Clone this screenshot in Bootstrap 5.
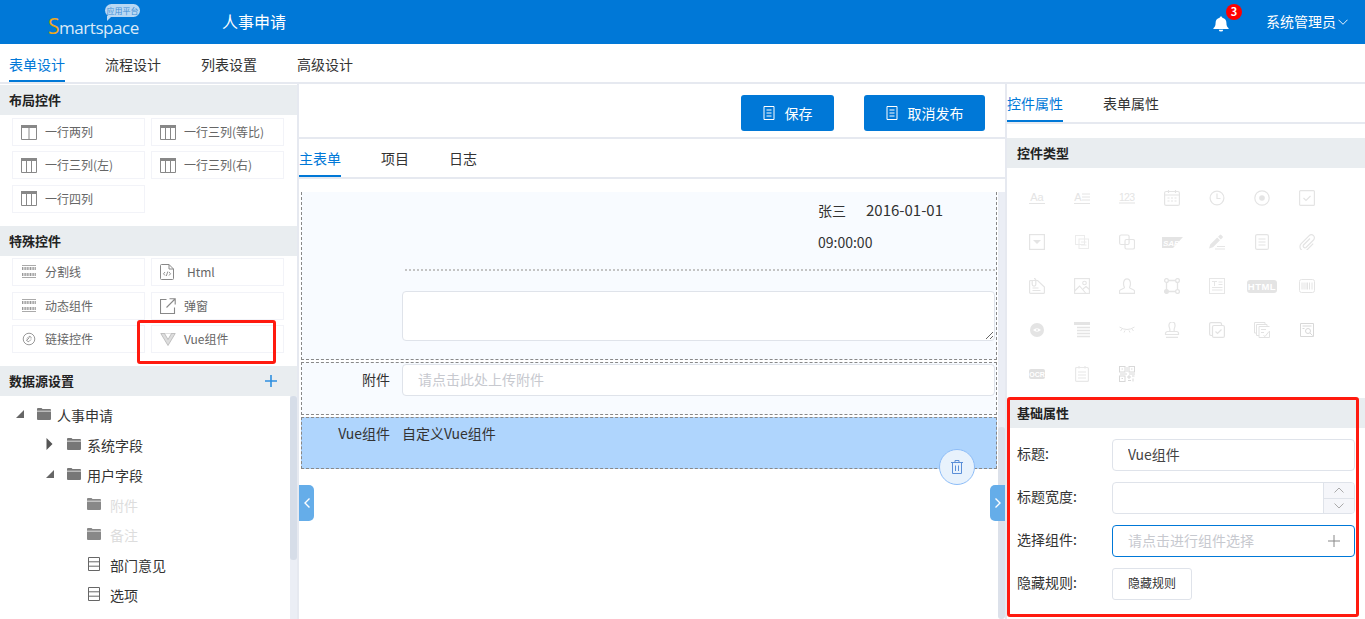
<!DOCTYPE html>
<html lang="zh-CN">
<head>
<meta charset="utf-8">
<title>人事申请</title>
<link rel="stylesheet" href="https://cdn.jsdelivr.net/npm/bootstrap@5.3.0/dist/css/bootstrap.min.css">
<style>
html,body{height:100%;overflow:hidden}
body{font-family:"Noto Sans CJK SC","Liberation Sans",sans-serif;font-size:14px;color:#333;background:#fff}
.app-top{height:44px;background:#0078d7;color:#fff;padding:0}
.logo-box{position:relative;width:222px;height:44px;flex:none}
.logo-word{position:absolute;left:48px;top:17px;font-family:"Open Sans","Liberation Sans",sans-serif;font-size:17px;line-height:18px;letter-spacing:-.45px;color:#dbeaf8;white-space:nowrap}
.logo-word b{font-weight:400;color:#f0a81e;font-size:21px}
.logo-tag{position:absolute;left:105px;top:4px;width:35px;height:13px;border-radius:7px;background:#b9d8f3;color:#3f8fd6;font-size:8px;line-height:13px;text-align:center;white-space:nowrap}
.logo-tag::after{content:"";position:absolute;left:2px;bottom:-4px;border-top:5px solid #b9d8f3;border-right:5px solid transparent}
.app-name{font-size:16px;margin-bottom:3px}
.bell-box{position:relative;width:16px;height:16px;margin:0 37px 4px 0}
.bell-count{position:absolute;left:13px;top:-8px;width:16px;height:16px;border-radius:50%;background:#f00;color:#fff;font-size:11px;font-weight:700;line-height:15px;text-align:center}
.user-name{margin:0 17px 1px 0;color:#fff;gap:2px}
.tabline{display:flex;gap:40px;border-bottom:2px solid #e6e9f0;margin:0;padding:0;list-style:none}
.tabline li{height:100%;line-height:36px;margin-bottom:-2px;border-bottom:2px solid transparent;color:#333;white-space:nowrap}
.tabline li.on{color:#0078d7;border-bottom-color:#0078d7}
.tabs-main{height:40px;padding-left:9px}
.tabs-main li{line-height:40px}
.work{height:535px;overflow:hidden}
.side-l{width:299px;flex:none;border-right:2px solid #e6e9f0;padding-top:1px;position:relative;height:100%;overflow:hidden}
.sec-head{height:30px;line-height:29px;background:#e9edf0;padding:0 9px;color:#222;font-weight:700;font-size:13px}
.tool-grid{display:grid;grid-template-columns:133px 133px;column-gap:6px;row-gap:5.4px;padding:3px 0 13.2px 12px}
.tool-grid.second{padding-top:2px;row-gap:5.6px;padding-bottom:12.8px}
.tool{height:28px;border:1px solid #f2f3f8;display:flex;align-items:center;padding-left:8px;font-size:12px;color:#666;position:relative;gap:8px;white-space:nowrap}
.tool svg{flex:none}
.tool .wide-gap{margin-left:5px}
.red-mark{position:absolute;border:3px solid #ff1a0f;border-radius:3px;pointer-events:none}
.red-l{left:-15px;top:-6px;width:139px;height:44px}
.tree-wrap{display:flex;height:223px}
.tree{flex:1;margin:0;padding:5px 0 0;list-style:none}
.tree li{height:30px;display:flex;align-items:center;color:#333;white-space:nowrap}
.tree .lv1{padding-left:16px}.tree .lv2{padding-left:46px}.tree .lv3{padding-left:87px}
.tree .arrow{width:8px;flex:none;margin:0 13px 3px 0}
.tree .fold{margin:0 6px 3px 0}
.tree .lv3 .fold{margin-right:9px}
.tree .off{color:#ddd}
.vbar{width:7px;flex:none;background:#ebeef5}
.vbar i{display:block;width:100%;background:#d6dde8;border-radius:3px}
.vbar-l i{height:164px}
.vbar-c i{height:192px;margin-top:235px;background:#dce1ea}
.mid{width:706px;flex:none;position:relative;height:100%;overflow:hidden}
.mid-tools{height:55px;border-bottom:2px solid #e6e9f0;padding:11px 20px 6px 0;justify-content:flex-end;gap:30px;display:flex;align-items:flex-start}
.act-btn{height:36px;background:#0078d7;border:0;color:#fff;border-radius:3px;font-size:14px;display:flex;align-items:center;justify-content:center;gap:10px;padding:0}
.act-save{width:93px}
.act-off{width:121px}
.tabs-sub{height:40px}
.tabs-sub li{line-height:38px}
.form-zone{display:flex;padding-top:13px;height:356px}
.form-col{width:696px;margin-left:2px;flex:none;display:flex;flex-direction:column;gap:2px}
.vbar-c{margin-left:1px;width:7px}
.fbox{border:1px dashed #888;background:#f8fbff;position:relative}
.fbox-a{border-top:0;height:168px;padding-top:2px}
.fbox-b{height:53px;display:flex;padding-top:1px}
.fbox-c{height:52px;display:flex;background:#afd5fd}
.stamp{padding-left:516px;line-height:32px;white-space:nowrap}
.stamp span{margin-right:20px}
.stamp em{font-style:normal;font-size:15px}
.dotline{border-top:2px dotted #c4c4c4;margin:11px 1px 0 103px}
.note{margin:20px 0 0 100px;width:593px;height:50px;border-radius:4px;border-color:#dfe3ea;background:#fff}
.f-label{width:88px;flex:none;text-align:right;line-height:30px;color:#333;white-space:nowrap}
.f-input{flex:1;margin:0 1px 0 12px;height:32px;border-radius:4px;border-color:#dfe3ea;font-size:14px;padding:0 15px 2px;box-shadow:none}
.f-input::placeholder{color:#c7c9cf}
.f-text{margin-left:12px;line-height:30px}
.trash-btn{position:absolute;right:21px;bottom:-17px;width:36px;height:36px;border-radius:50%;background:#e8f2fc;border:1px solid #8dbdf8;display:flex;align-items:center;justify-content:center;padding:0}
.fold-tab{position:absolute;top:401px;width:15px;height:36px;background:#65ade9;display:flex;align-items:center;justify-content:center}
.fold-l{left:0;border-radius:0 5px 5px 0}
.fold-r{right:0;border-radius:5px 0 0 5px}
.side-r{flex:1;border-left:2px solid #e6e9f0;height:100%;overflow:hidden}
.tabs-side{height:40px;margin-bottom:14px}
.tabs-side li{line-height:38px}
.ctl-grid{display:grid;grid-template-columns:repeat(7,45px);grid-auto-rows:44px;padding:8px 0 0 7.5px;height:230px;justify-items:center;align-items:center}
.prop-wrap{position:relative}
.prop-head{padding-left:10px}
.red-r{left:0;top:-1px;width:352px;height:220px}
.prop-body{padding:11px 10px 0 10px;display:flex;flex-direction:column;gap:11px}
.prop-row{display:flex;align-items:center;height:32px}
.prop-row label{width:95px;flex:none;margin:0 0 4px;color:#333}
.prop-field{width:243px;height:32px;border:1px solid #dfe3ea;border-radius:4px;padding:0 15px 3px;font-size:14px;color:#444;box-shadow:none}
.prop-field::placeholder{color:#c7c9cf}
.spin-group{position:relative;width:243px;height:32px}
.spin-group .prop-field{width:100%}
.spin-btns{position:absolute;right:1px;top:1px;bottom:1px;width:31px;border-left:1px solid #dfe3ea;background:#f5f6fa;display:flex;flex-direction:column;border-radius:0 3px 3px 0}
.spin-btns span{flex:1;display:flex;align-items:center;justify-content:center}
.spin-btns span+span{border-top:1px solid #dfe3ea}
.pick-group{position:relative;width:243px;height:32px}
.pick-group .prop-field{width:100%;border-color:#0078d7}
.pick-plus{position:absolute;right:15px;top:10px}
.rule-btn{width:80px;height:32px;padding:0 0 2px;background:#fff;border:1px solid #dfe3ea;border-radius:3px;font-size:12px;color:#333}
</style>
</head>
<body>
<nav class="navbar app-top d-flex align-items-center flex-nowrap">
  <div class="logo-box">
    <span class="logo-word"><b>S</b>martspace</span>
    <span class="logo-tag">应用平台</span>
  </div>
  <span class="app-name">人事申请</span>
  <div class="ms-auto d-flex align-items-center">
    <div class="bell-box">
      <svg width="16" height="16" viewBox="0 0 16 18" preserveAspectRatio="none" fill="#fff"><path d="M8 0.5a1.3 1.3 0 0 1 1.3 1.4C12 2.6 13.4 4.8 13.4 7.5c0 3.4.8 4.9 2.2 6.2v.8H.4v-.8C1.800 12.400 2.600 10.900 2.600 7.500 2.600 4.800 4 2.600 6.700 1.900A1.300 1.300 0 0 1 8 .5z"/><path d="M5.800 15.400h4.400A2.200 2.200 0 0 1 8 17.500a2.200 2.200 0 0 1-2.200-2.100z"/></svg>
      <span class="bell-count">3</span>
    </div>
    <span class="user-name d-flex align-items-center">系统管理员<svg width="10" height="6" viewBox="0 0 11 6" fill="none" stroke="#fff"><path d="M.5.500l5 5 5-5"/></svg></span>
  </div>
</nav>
<ul class="tabline tabs-main">
  <li class="on">表单设计</li><li>流程设计</li><li>列表设置</li><li>高级设计</li>
</ul>
<div class="work d-flex">
  <aside class="side-l">
    <div class="sec-head">布局控件</div>
    <div class="tool-grid">
      <div class="tool"><svg width="16" height="15" viewBox="0 0 16 15" fill="none" stroke="#888"><path d="M.5 2v12.500h15V2M8 2v12.500"/><path d="M0 1.500h16" stroke-width="3"/></svg>一行两列</div>
      <div class="tool"><svg width="16" height="15" viewBox="0 0 16 15" fill="none" stroke="#888"><path d="M.5 2v12.500h15V2M5.500 2v12.500M10.500 2v12.500"/><path d="M0 1.500h16" stroke-width="3"/></svg>一行三列(等比)</div>
      <div class="tool"><svg width="16" height="15" viewBox="0 0 16 15" fill="none" stroke="#888"><path d="M.5 2v12.500h15V2M5.500 2v12.500M10.500 2v12.500"/><path d="M0 1.500h16" stroke-width="3"/></svg>一行三列(左)</div>
      <div class="tool"><svg width="16" height="15" viewBox="0 0 16 15" fill="none" stroke="#888"><path d="M.5 2v12.500h15V2M5.500 2v12.500M10.500 2v12.500"/><path d="M0 1.500h16" stroke-width="3"/></svg>一行三列(右)</div>
      <div class="tool"><svg width="16" height="15" viewBox="0 0 16 15" fill="none" stroke="#888"><path d="M.5 2v12.500h15V2M5.500 2v12.500M10.500 2v12.500"/><path d="M0 1.500h16" stroke-width="3"/></svg>一行四列</div>
    </div>
    <div class="sec-head">特殊控件</div>
    <div class="tool-grid second">
      <div class="tool"><svg width="16" height="13" viewBox="0 0 16 13" fill="none"><path d="M1 .500h14M1 12.500h14" stroke="#aaa"/><path d="M1 3.500h14M1 9.500h14" stroke-width="3" stroke-dasharray="1 .6" stroke="#999"/></svg>分割线</div>
      <div class="tool"><svg width="14" height="16" viewBox="0 0 14 16" fill="none" stroke="#888"><path d="M.5 1.500a1 1 0 0 1 1-1h7.500l4.500 4.500v9.500a1 1 0 0 1-1 1h-11a1 1 0 0 1-1-1zM9 .5v4.500h4.500"/><path d="M5 8l-1.500 1.800L5 11.500M9 8l1.500 1.800L9 11.500M7.800 7.500l-1.500 4.500" stroke="#777" stroke-width=".8"/></svg><span class="wide-gap">Html</span></div>
      <div class="tool"><svg width="16" height="13" viewBox="0 0 16 13" fill="none"><path d="M1 .500h14M1 12.500h14" stroke="#aaa"/><path d="M1 3.500h14M1 9.500h14" stroke-width="3" stroke-dasharray="1 .6" stroke="#999"/></svg>动态组件</div>
      <div class="tool"><svg width="16" height="16" viewBox="0 0 16 16" fill="none" stroke="#888" stroke-width="1.100"><path d="M6.500 1.500H.5v14h14v-6M6.500 9.500l8.500-8.500M9.500.8h5.700v5.700"/></svg>弹窗</div>
      <div class="tool"><svg width="16" height="14" viewBox="0 0 16 14" fill="none" stroke="#999"><circle cx="8" cy="7" r="5.800"/><path d="M5.500 8.500l3-3M6 6.500l2-2a1.500 1.500 0 0 1 2 2M10 7.500l-2 2a1.500 1.500 0 0 1-2-2"/></svg>链接控件</div>
      <div class="tool"><svg width="16" height="13" viewBox="0 0 16 13" fill="#ddd" stroke="#b4b4b4" stroke-width=".8"><path d="M.8.500h14.400L8 12.500z"/><path d="M4.500.500L8 6.500 11.500.500" fill="#fff"/></svg>Vue组件<span class="red-mark red-l"></span></div>
    </div>
    <div class="sec-head d-flex justify-content-between align-items-center pe-3"><span>数据源设置</span><svg class="me-1" width="12" height="12" viewBox="0 0 12 12" stroke="#2f8fe0" stroke-width="1.600"><path d="M6 0v12M0 6h12"/></svg></div>
    <div class="tree-wrap">
      <ul class="tree">
        <li class="lv1"><svg class="arrow" width="8" height="8" viewBox="0 0 8 8" fill="#666"><path d="M8 0v8H0z"/></svg><svg class="fold" width="14" height="14" viewBox="0 0 14 14" fill="#777"><path d="M0 2a1 1 0 0 1 1-1h3.500l1 1H13a1 1 0 0 1 1 1v.7H0zM0 4.600h14V12a1 1 0 0 1-1 1H1a1 1 0 0 1-1-1z"/></svg>人事申请</li>
        <li class="lv2"><svg class="arrow" width="7" height="12" viewBox="0 0 7 12" fill="#555"><path d="M0 0l6 6-6 6z"/></svg><svg class="fold" width="14" height="14" viewBox="0 0 14 14" fill="#777"><path d="M0 2a1 1 0 0 1 1-1h3.500l1 1H13a1 1 0 0 1 1 1v.7H0zM0 4.600h14V12a1 1 0 0 1-1 1H1a1 1 0 0 1-1-1z"/></svg>系统字段</li>
        <li class="lv2"><svg class="arrow" width="8" height="8" viewBox="0 0 8 8" fill="#666"><path d="M8 0v8H0z"/></svg><svg class="fold" width="14" height="14" viewBox="0 0 14 14" fill="#777"><path d="M0 2a1 1 0 0 1 1-1h3.500l1 1H13a1 1 0 0 1 1 1v.7H0zM0 4.600h14V12a1 1 0 0 1-1 1H1a1 1 0 0 1-1-1z"/></svg>用户字段</li>
        <li class="lv3 off"><svg class="fold" width="14" height="14" viewBox="0 0 14 14" fill="#888"><path d="M0 2a1 1 0 0 1 1-1h3.500l1 1H13a1 1 0 0 1 1 1v.7H0zM0 4.600h14V12a1 1 0 0 1-1 1H1a1 1 0 0 1-1-1z"/></svg>附件</li>
        <li class="lv3 off"><svg class="fold" width="14" height="14" viewBox="0 0 14 14" fill="#888"><path d="M0 2a1 1 0 0 1 1-1h3.500l1 1H13a1 1 0 0 1 1 1v.7H0zM0 4.600h14V12a1 1 0 0 1-1 1H1a1 1 0 0 1-1-1z"/></svg>备注</li>
        <li class="lv3"><svg class="fold" width="14" height="14" viewBox="0 0 14 14" fill="none" stroke="#666"><path d="M1.500.500h11v13h-11zM1.500 4.800h11M1.500 9.200h11"/></svg>部门意见</li>
        <li class="lv3"><svg class="fold" width="14" height="14" viewBox="0 0 14 14" fill="none" stroke="#666"><path d="M1.500.500h11v13h-11zM1.500 4.800h11M1.500 9.200h11"/></svg>选项</li>
      </ul>
      <div class="vbar vbar-l"><i></i></div>
    </div>
  </aside>
  <main class="mid">
    <div class="mid-tools">
      <button class="act-btn act-save" type="button"><svg width="12" height="14" viewBox="0 0 12 14" fill="none" stroke="#fff"><path d="M1 .5h10v13H1zM3.500 4h5M3.500 7h5M3.500 10h5"/></svg>保存</button>
      <button class="act-btn act-off" type="button"><svg width="12" height="14" viewBox="0 0 12 14" fill="none" stroke="#fff"><path d="M1 .5h10v13H1zM3.500 4h5M3.500 7h5M3.500 10h5"/></svg>取消发布</button>
    </div>
    <ul class="tabline tabs-sub">
      <li class="on">主表单</li><li>项目</li><li>日志</li>
    </ul>
    <div class="form-zone">
      <div class="form-col">
        <div class="fbox fbox-a">
          <div class="stamp"><span>张三</span><em>2016-01-01</em><br>09:00:00</div>
          <div class="dotline"></div>
          <textarea class="form-control note" aria-label="备注"></textarea>
        </div>
        <div class="fbox fbox-b">
          <span class="f-label">附件</span>
          <input class="form-control f-input" type="text" placeholder="请点击此处上传附件">
        </div>
        <div class="fbox fbox-c">
          <span class="f-label">Vue组件</span>
          <span class="f-text">自定义Vue组件</span>
          <button class="trash-btn" type="button" aria-label="删除"><svg width="12" height="14" viewBox="0 0 12 14" fill="none" stroke="#5b8fd8"><path d="M0 2.500h12M4 2.500V.5h4v2M1.500 2.500v11h9v-11M4.500 5.500v5.500M7.500 5.500v5.500"/></svg></button>
        </div>
      </div>
      <div class="vbar vbar-c"><i></i></div>
    </div>
    <span class="fold-tab fold-l"><svg width="6" height="10" viewBox="0 0 6 10" fill="none" stroke="#fff" stroke-width="1.400"><path d="M5.500.5L1 5l4.500 4.500"/></svg></span>
    <span class="fold-tab fold-r"><svg width="6" height="10" viewBox="0 0 6 10" fill="none" stroke="#fff" stroke-width="1.400"><path d="M.5.5L5 5 .5 9.500"/></svg></span>
  </main>
  <aside class="side-r">
    <ul class="tabline tabs-side">
      <li class="on">控件属性</li><li>表单属性</li>
    </ul>
    <div class="sec-head prop-head">控件类型</div>
    <div class="ctl-grid">
      <svg width="16" height="16" viewBox="0 0 16 16" fill="#e4e4e4"><text x="8" y="11" text-anchor="middle" font-size="11" font-family="Liberation Sans">Aa</text><rect y="13" width="16" height="1"/></svg>
      <svg width="16" height="16" viewBox="0 0 16 16" fill="#e4e4e4" stroke="#e4e4e4"><text x="4" y="11" text-anchor="middle" font-size="11" stroke="none" font-family="Liberation Sans">A</text><path d="M8 4h8M8 7h8M8 10h8M0 13.500h16" fill="none"/></svg>
      <svg width="16" height="16" viewBox="0 0 16 16" fill="#e4e4e4"><text x="8" y="10.500" text-anchor="middle" font-size="10.500" textLength="16" font-family="Liberation Sans">123</text><rect y="12.500" width="16" height="1"/></svg>
      <svg width="16" height="16" viewBox="0 0 16 16" fill="none" stroke="#e4e4e4" stroke-width="1.200"><rect x=".6" y="1.500" width="14.800" height="13.900" rx="1.500"/><path d="M4.500 0v3M11.500 0v3M.6 5h14.800M3.500 8h2M7 8h2M10.500 8h2M3.500 11h2M7 11h2M10.500 11h2"/></svg>
      <svg width="16" height="16" viewBox="0 0 16 16" fill="none" stroke="#e4e4e4" stroke-width="1.200"><circle cx="8" cy="8" r="6.900"/><path d="M8 3.500V8.500H11.500"/></svg>
      <svg width="16" height="16" viewBox="0 0 16 16" fill="none" stroke="#e4e4e4" stroke-width="1.200"><circle cx="8" cy="8" r="7.200"/><circle cx="8" cy="8" r="2.800" fill="#e4e4e4" stroke="none"/></svg>
      <svg width="16" height="16" viewBox="0 0 16 16" fill="none" stroke="#e4e4e4" stroke-width="1.200"><rect x=".6" y=".6" width="14.800" height="14.800" rx="1"/><path d="M4.500 8l2.500 2.500 4.500-4.500"/></svg>

      <svg width="16" height="16" viewBox="0 0 16 16" fill="none" stroke="#e4e4e4" stroke-width="1.200"><rect x=".6" y=".6" width="14.800" height="14.800"/><path d="M4 6h8L8 10z" fill="#e4e4e4" stroke="none"/></svg>
      <svg width="14" height="14" viewBox="0 0 14 14" fill="none" stroke="#ececec"><rect x=".5" y=".5" width="9" height="9"/><rect x="4" y="4" width="9.500" height="9.500"/><path d="M6 7h5.500M6 10h5.500"/></svg>
      <svg width="16" height="16" viewBox="0 0 16 16" fill="none" stroke="#e4e4e4" stroke-width="1.200"><rect x=".6" y="1" width="9.500" height="9.500" rx="1.500"/><rect x="6" y="5.500" width="9.500" height="9.500" rx="1.500"/></svg>
      <svg width="21" height="11" viewBox="0 0 21 11"><path d="M0 0h21L11 11H0z" fill="#e4e4e4"/><text x="1" y="8.500" font-size="8" font-weight="700" font-style="italic" fill="#fff" font-family="Liberation Sans">SAP</text></svg>
      <svg width="16" height="16" viewBox="0 0 16 16" fill="#e6e6e6"><path d="M0 14.500l1.200-4 7-7 2.800 2.800-7 7zM9 2.700l1.800-1.800a1 1 0 0 1 1.400 0l1.400 1.400a1 1 0 0 1 0 1.400L11.800 5.500z"/><path d="M8 12h8v1H8zM6 14.500h10v1H6z"/></svg>
      <svg width="14" height="16" viewBox="0 0 14 16" fill="none" stroke="#e4e4e4" stroke-width="1.200"><rect x=".6" y=".6" width="12.800" height="14.800" rx="1.500"/><path d="M3.500 5h7M3.500 8h7M3.500 11h7"/></svg>
      <svg width="16" height="16" viewBox="0 0 16 16" fill="none" stroke="#e4e4e4" stroke-width="1.200"><path d="M11 4.500l-6.500 6.500a1.800 1.800 0 0 0 2.500 2.500l7.500-7.500a3 3 0 0 0-4.300-4.300l-8 8a4.200 4.200 0 0 0 6 6l6-6"/></svg>

      <svg width="16" height="16" viewBox="0 0 16 16" fill="none" stroke="#e4e4e4" stroke-width="1.200"><path d="M.6 3.500a1 1 0 0 1 1-1h7l6.800 6.500v5.400a1 1 0 0 1-1 1H1.600a1 1 0 0 1-1-1zM5 .5a1.800 1.800 0 0 1 1.800 1.800v4a1.800 1.800 0 0 1-3.600 0V2.800M3.500 10h6M3.500 12.500h8"/></svg>
      <svg width="16" height="16" viewBox="0 0 16 16" fill="none" stroke="#e4e4e4" stroke-width="1.100"><rect x=".6" y=".6" width="14.800" height="14.800"/><circle cx="10.500" cy="5" r="1.800"/><path d="M.6 13l5-5 6 7M9 11l3-2.500 3.500 3"/></svg>
      <svg width="16" height="16" viewBox="0 0 16 16" fill="none" stroke="#e4e4e4" stroke-width="1.200"><path d="M5.500 9.500C4 7 4 .8 8 .8s4 6.200 2.500 8.700c0 1.500 5 1.500 5 3.500v2.300H.5V13c0-2 5-2 5-3.500z"/></svg>
      <svg width="16" height="16" viewBox="0 0 16 16" fill="none" stroke="#e4e4e4" stroke-width="1.300"><circle cx="2.500" cy="2.500" r="1.900"/><circle cx="13.500" cy="2.500" r="1.900"/><circle cx="2.500" cy="13.500" r="1.900" fill="#e4e4e4"/><circle cx="13.500" cy="13.500" r="1.900"/><path d="M4.500 2.500h7M2.500 4.500v7M13.500 4.500v7M4.500 13.500h7"/></svg>
      <svg width="16" height="16" viewBox="0 0 16 16" fill="none" stroke="#e6e6e6"><rect x=".5" y=".5" width="15" height="15"/><path d="M3 3.500h5M5.500 3.500V8M9.500 4h4M9.500 6.500h4M3 9.500h10.500M3 12h10.500"/></svg>
      <svg width="30" height="13" viewBox="0 0 30 13"><rect width="30" height="13" rx="3" fill="#e4e4e4"/><text x="15" y="10" text-anchor="middle" font-size="9.500" font-weight="700" letter-spacing=".5" fill="#fff" font-family="Liberation Sans">HTML</text></svg>
      <svg width="16" height="14" viewBox="0 0 16 14" fill="none" stroke="#e4e4e4"><rect x=".5" y=".5" width="15" height="13" rx="2"/><path d="M3 3.500v7M5 3.500v7M7 3.500v7M8.500 3.500v7M10.500 3.500v7M13 3.500v7"/></svg>

      <svg width="14" height="14" viewBox="0 0 14 14"><circle cx="7" cy="7" r="7" fill="#e4e4e4"/><path d="M3 7q4-3.500 8 0q-4 3.500-8 0z" fill="#fff"/><circle cx="7" cy="7" r="1" fill="#e4e4e4"/></svg>
      <svg width="16" height="16" viewBox="0 0 16 16" stroke="#e4e4e4" fill="none"><path d="M0 1.500h16" stroke-width="3"/><path d="M3 5.500h13M3 8.500h13M3 11.500h13M3 14.500h13" stroke-width="1.500"/></svg>
      <svg width="16" height="8" viewBox="0 0 16 8" fill="none" stroke="#e4e4e4"><path d="M.5 1q7.500 5 15 0M3 3l-1.500 2M6 4.500L5 6.500M10 4.500l1 2M13 3l1.500 2"/></svg>
      <svg width="16" height="16" viewBox="0 0 16 16" fill="none" stroke="#e4e4e4" stroke-width="1.200"><path d="M5.500 9.500C7 7 4.500 5.500 5 3a3 3 0 0 1 6 0c.5 2.500-2 4-.5 6.500zM1.500 12.500v-1a2 2 0 0 1 2-2h9a2 2 0 0 1 2 2v1zM2 15.300h12"/></svg>
      <svg width="16" height="16" viewBox="0 0 16 16" fill="none" stroke="#e2e2e2" stroke-width="1.200"><path d="M3.500 13.500H2a1.400 1.400 0 0 1-1.400-1.400V2A1.400 1.400 0 0 1 2 .6h9A1.400 1.400 0 0 1 12.500 2v1.500"/><rect x="3.500" y="3.500" width="11.900" height="11.900" rx="1.500"/><path d="M6.500 9.500l2 2 4-4"/></svg>
      <svg width="16" height="16" viewBox="0 0 16 16" fill="none" stroke="#e2e2e2"><path d="M2.500 11H.5V.5H11v2M5 13.500H2.500V2.500H13v2"/><path d="M15.500 9v6.500H5V4.500h10.500M7 7.500h5M7 10.500h3M9.500 13.500l1.500 1 4-5"/></svg>
      <svg width="14" height="14" viewBox="0 0 14 14" fill="none" stroke="#d8d8d8"><path d="M.5.500h13v13H.5zM2.500 3h9M2.500 5.500h2"/><circle cx="8" cy="8" r="2.500"/><path d="M10 10l2.500 2.500"/></svg>

      <svg width="16" height="10" viewBox="0 0 16 10"><rect width="16" height="10" rx="2" fill="#e0e0e0"/><text x="8" y="8" text-anchor="middle" font-size="7" font-weight="700" fill="#fff" font-family="Liberation Sans">OCR</text></svg>
      <svg width="14" height="16" viewBox="0 0 14 16" fill="none" stroke="#e8e8e8" stroke-width="1.200"><rect x=".6" y="1.500" width="12.800" height="13.900" rx="1"/><path d="M4 0v2.500M10 0v2.500M3 6h8M3 9h8M3 12h8"/></svg>
      <svg width="16" height="16" viewBox="0 0 16 16" fill="none" stroke="#d8d8d8"><rect x=".5" y=".5" width="5.500" height="5.500"/><rect x="10" y=".5" width="5.500" height="5.500"/><rect x=".5" y="10" width="5.500" height="5.500"/><path d="M2.500 3h1.500M12 3h1.500M2.500 12.500h1.500M8 1v5M8 8H1M10 8h6M9 10h2v2H9zM13 10h2.500M9 14.500h3M14 12.500v3"/></svg>
    </div>
    <div class="prop-wrap">
      <div class="sec-head prop-head">基础属性</div>
      <div class="prop-body">
        <div class="prop-row"><label for="ti">标题:</label><input id="ti" class="form-control prop-field" type="text" value="Vue组件"></div>
        <div class="prop-row"><label for="tw">标题宽度:</label>
          <div class="spin-group"><input id="tw" class="form-control prop-field" type="text">
            <div class="spin-btns"><span><svg width="10" height="6" viewBox="0 0 10 6" fill="none" stroke="#aaa"><path d="M.5 5.500l4.500-4.500 4.500 4.500"/></svg></span><span><svg width="10" height="6" viewBox="0 0 10 6" fill="none" stroke="#aaa"><path d="M.5.500l4.500 4.500 4.500-4.500"/></svg></span></div>
          </div></div>
        <div class="prop-row"><label for="pc">选择组件:</label>
          <div class="pick-group"><input id="pc" class="form-control prop-field" type="text" placeholder="请点击进行组件选择">
            <svg class="pick-plus" width="12" height="12" viewBox="0 0 12 12" stroke="#888"><path d="M6 0v12M0 6h12"/></svg>
          </div></div>
        <div class="prop-row"><label>隐藏规则:</label><button class="btn rule-btn" type="button">隐藏规则</button></div>
      </div>
      <span class="red-mark red-r"></span>
    </div>
  </aside>
</div>
<script src="https://cdn.jsdelivr.net/npm/bootstrap@5.3.0/dist/js/bootstrap.bundle.min.js"></script>
</body>
</html>
